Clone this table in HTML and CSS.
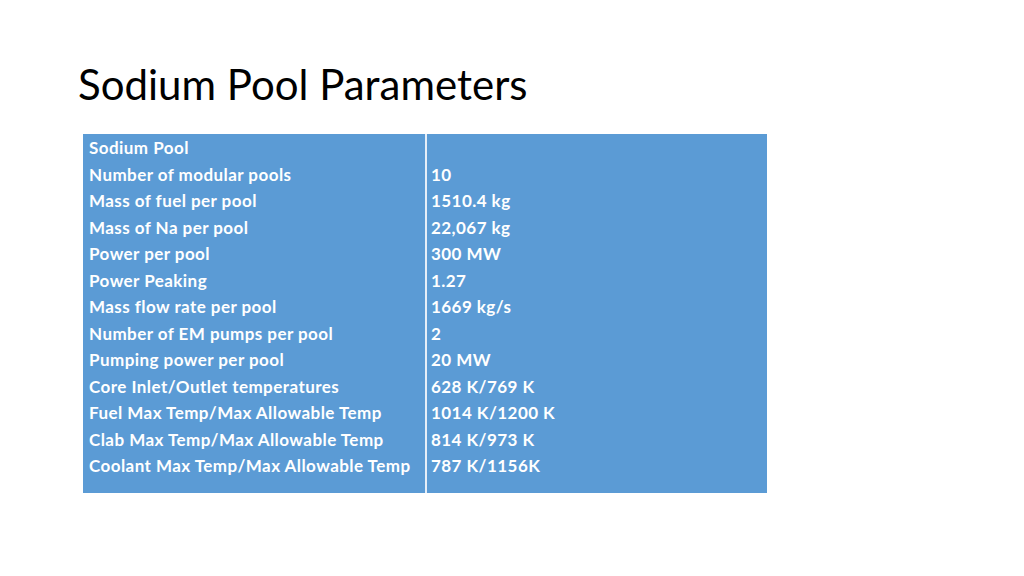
FILE: index.html
```html
<!DOCTYPE html>
<html>
<head>
<meta charset="utf-8">
<link rel="stylesheet" href="styles.css">
</head>
<body>
<div class="slide">
  <h1 class="title">Sodium Pool Parameters</h1>
  <div class="table">
    <div class="cell left">
      <div>Sodium Pool</div>
      <div>Number of modular pools</div>
      <div>Mass of fuel per pool</div>
      <div>Mass of Na per pool</div>
      <div>Power per pool</div>
      <div>Power Peaking</div>
      <div>Mass flow rate per pool</div>
      <div>Number of EM pumps per pool</div>
      <div>Pumping power per pool</div>
      <div>Core Inlet/Outlet temperatures</div>
      <div>Fuel Max Temp/Max Allowable Temp</div>
      <div>Clab Max Temp/Max Allowable Temp</div>
      <div>Coolant Max Temp/Max Allowable Temp</div>
    </div>
    <div class="divider"></div>
    <div class="cell right">
      <div>&nbsp;</div>
      <div>10</div>
      <div>1510.4 kg</div>
      <div>22,067 kg</div>
      <div>300 MW</div>
      <div>1.27</div>
      <div>1669 kg/s</div>
      <div>2</div>
      <div>20 MW</div>
      <div>628 K/769 K</div>
      <div>1014 K/1200 K</div>
      <div>814 K/973 K</div>
      <div>787 K/1156K</div>
    </div>
  </div>
</div>
</body>
</html>
```
FILE: styles.css
```css
html, body {
  margin: 0;
  padding: 0;
  background: #ffffff;
}
.slide {
  width: 1024px;
  height: 576px;
  position: relative;
  overflow: hidden;
  font-family: "Lato", "Open Sans", sans-serif;
}
.title {
  margin: 0;
  padding: 56px 0 0 78px;
  font-weight: 400;
  font-size: 42px;
  line-height: 56px;
  color: #000000;
  letter-spacing: 0;
}
.table {
  display: flex;
  margin: 22px 0 0 83px;
  width: 684px;
  height: 359px;
}
.cell {
  background: #5b9bd5;
  color: #ffffff;
  font-weight: 700;
  font-size: 17px;
  letter-spacing: 0.45px;
  line-height: 26.5px;
  padding: 1px 0 0 6px;
  box-sizing: border-box;
}
.left {
  width: 342px;
}
.divider {
  width: 2px;
  background: #e6eef8;
}
.right {
  flex: 1;
  padding-left: 4px;
}
```
